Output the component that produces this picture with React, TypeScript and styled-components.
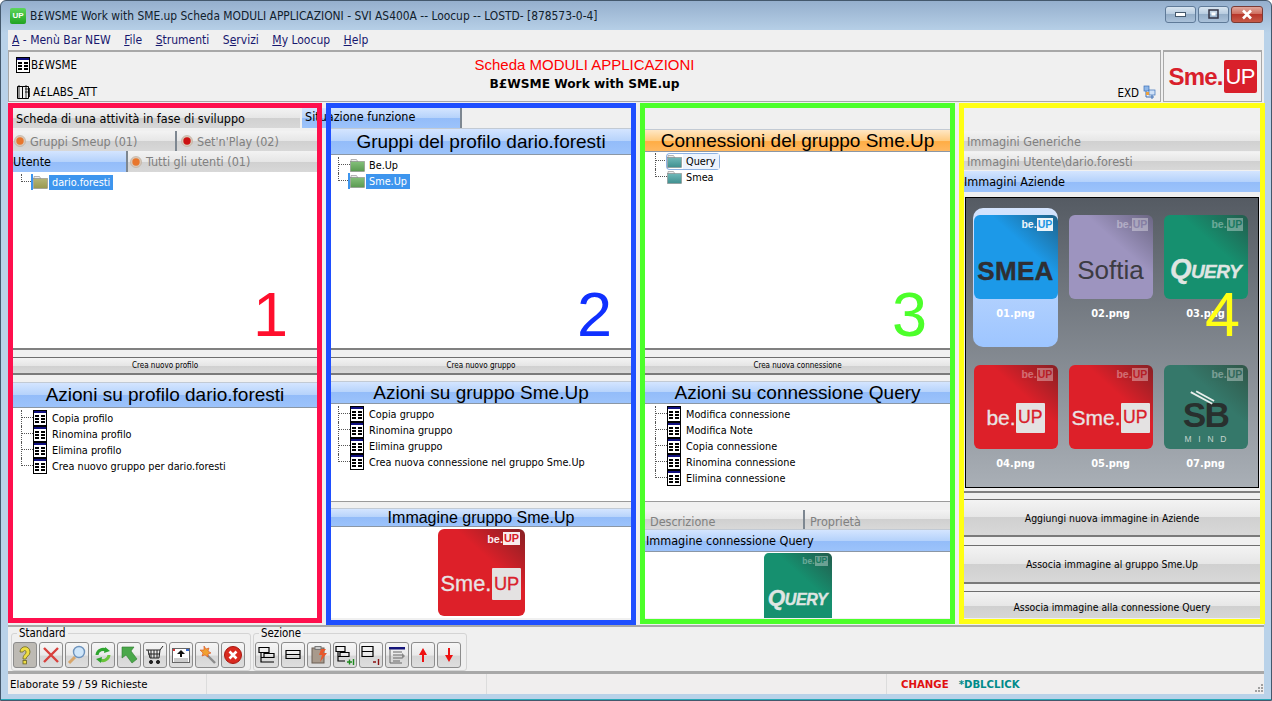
import React from 'react';
import styled, { createGlobalStyle, css } from 'styled-components';

const UI_FONT = `'DejaVu Sans Condensed', 'DejaVu Sans', sans-serif`;
const ARIAL = `'Liberation Sans', Arial, sans-serif`;

const GlobalStyle = createGlobalStyle`
  html, body { margin: 0; padding: 0; background: #fff; overflow: hidden; }
  body { font-family: ${UI_FONT}; font-size: 10.8px; color: #000; }
  * { box-sizing: border-box; }
`;

const Win = styled.div`
  width: 1272px;
  height: 701px;
  display: flex;
  flex-direction: column;
  padding: 0 7px 6px;
  border: 1px solid #44586c;
  border-radius: 6px 6px 0 0;
  background: linear-gradient(180deg, #95afcd 0, #b9d2e9 32px, #b9d2e9 100%);
  box-shadow: inset 0 -1px 0 #2aa9b8;
  overflow: hidden;
`;

const TitleBar = styled.div`
  height: 29px;
  display: flex;
  align-items: center;
  gap: 4px;
  padding: 0 1px 0 2px;
`;

const AppBadge = styled.span`
  width: 16px;
  height: 16px;
  border-radius: 2px;
  background: linear-gradient(180deg, #5cd65c, #22a322);
  color: #fff;
  font: bold 8px ${ARIAL};
  display: flex;
  align-items: center;
  justify-content: center;
`;

const TitleText = styled.span`
  font-size: 11.9px;
  color: #10202c;
  flex: 1;
  white-space: nowrap;
`;

const WinButtons = styled.div`
  display: flex;
  gap: 2px;
  margin-top: -3px;
`;

const WinButton = styled.div<{ $close?: boolean }>`
  width: ${(p) => (p.$close ? '32px' : '31px')};
  height: 17px;
  border: 1px solid ${(p) => (p.$close ? '#7a3a34' : '#5f7a98')};
  border-radius: 3px;
  display: flex;
  align-items: center;
  justify-content: center;
  background: ${(p) =>
    p.$close
      ? 'linear-gradient(180deg,#e0a79c 0,#cf6f60 45%,#b8362a 50%,#c65a48 100%)'
      : 'linear-gradient(180deg,#d9e5f0 0,#b8cce0 45%,#95aec8 50%,#abc2da 100%)'};
`;

const Menu = styled.div`
  height: 20px;
  background: #f0f0f0;
  display: flex;
  align-items: center;
  gap: 13.5px;
  padding-left: 4px;
  color: #17176e;
  font-size: 12px;
`;

const MenuItem = styled.span`
  & u { text-underline-offset: 1px; }
`;

const HeaderBand = styled.div`
  height: 52px;
  background: #f0f0f0;
  display: flex;
  gap: 2px;
  padding-right: 2px;
`;

const HeaderMain = styled.div`
  flex: 1;
  display: grid;
  grid-template-columns: 1fr auto 1fr;
  border: 1px solid #a8a8a8;
  border-top: 2px solid #a8a8a8;
`;

const HeaderLeft = styled.div`
  display: flex;
  flex-direction: column;
  gap: 7px;
  padding: 3px 0 0 7px;
`;

const HeaderItem = styled.div`
  display: flex;
  align-items: center;
  gap: 1px;
  font-size: 11.5px;
  height: 20px;
`;

const HeaderCenter = styled.div`
  display: flex;
  flex-direction: column;
  align-items: center;
  padding-top: 3px;
`;

const SheetTitle = styled.div`
  color: #ff0000;
  font: 15px ${ARIAL};
  line-height: 19px;
`;

const SheetSubtitle = styled.div`
  font-weight: bold;
  font-size: 12.2px;
  line-height: 21px;
  font-family: 'DejaVu Sans', sans-serif;
`;

const HeaderRight = styled.div`
  display: flex;
  align-items: flex-end;
  justify-content: flex-end;
  gap: 4px;
  padding: 0 3px 2px 0;
  font-size: 11.5px;
`;

const LogoBox = styled.div`
  width: 99px;
  border: 1px solid #a8a8a8;
  border-top-width: 2px;
  display: flex;
  align-items: center;
  justify-content: center;
  color: #d9202b;
  font: bold 24px ${ARIAL};
  letter-spacing: -0.8px;
`;

const LogoUp = styled.span`
  background: #d9202b;
  color: #fff;
  border-radius: 2px;
  height: 33px;
  display: flex;
  align-items: center;
  padding: 0 2px;
  font-size: 22px;
  font-weight: normal;
  margin-left: 1px;
`;

const Workspace = styled.div`
  height: 523px;
  background: #f0f0f0;
  padding: 6px 0 0 5px;
  display: grid;
  grid-template-columns: 304px 300px 305px 296px;
  grid-template-rows: 20px 490px;
  column-gap: 14px;
`;

const TabStrip = styled.div`
  grid-column: 1 / 3;
  grid-row: 1;
  display: flex;
  gap: 2px;
`;

const Column = styled.div<{ $col: number; $full?: boolean }>`
  grid-column: ${(p) => p.$col};
  grid-row: ${(p) => (p.$full ? '1 / 3' : '2')};
  display: flex;
  flex-direction: column;
  min-width: 0;
  overflow: hidden;
`;

const Frame = styled.div<{ $col: number; $color: string; $bottom: number }>`
  grid-column: ${(p) => p.$col};
  grid-row: 1 / 3;
  margin: -5px -5px ${(p) => p.$bottom}px;
  border: 5px solid ${(p) => p.$color};
  position: relative;
  z-index: 5;
  pointer-events: none;
`;

const Digit = styled.span<{ $color: string; $right: number }>`
  position: absolute;
  top: 175px;
  right: ${(p) => p.$right}px;
  color: ${(p) => p.$color};
  font: 63px/1 ${ARIAL};
`;

const grey = css`
  background: linear-gradient(180deg, #f3f3f3 0, #e6e6e6 50%, #d0d0d0 50%, #d8d8d8 100%);
`;
const blue = css`
  background: linear-gradient(180deg, #d4e5ff 0, #b5d2fb 50%, #93bcf9 50%, #9cc3fb 100%);
`;
const orange = css`
  background: linear-gradient(180deg, #ffe7c4 0, #ffcb80 50%, #ffad45 55%, #ffb860 100%);
`;

const Tab = styled.div<{
  $active?: boolean;
  $w?: number;
  $h?: number;
  $strong?: boolean;
  $pad?: number;
  $raise?: number;
  $drop?: number;
}>`
  ${(p) => (p.$active ? blue : grey)};
  ${(p) => (p.$w ? `width: ${p.$w}px;` : 'flex: 1;')}
  height: ${(p) => p.$h ?? 20}px;
  display: flex;
  align-items: center;
  gap: 4px;
  padding: ${(p) => p.$drop ?? 0}px 0 ${(p) => p.$raise ?? 0}px ${(p) => p.$pad ?? 3}px;
  font-size: 12.5px;
  white-space: nowrap;
  overflow: hidden;
  color: ${(p) => (p.$active || p.$strong ? '#000' : '#808080')};
  border-right: ${(p) => (p.$strong ? 'none' : '2px solid #7d8791')};
`;

const TabRow = styled.div<{ $top?: number }>`
  display: flex;
  flex: none;
  margin-top: ${(p) => p.$top ?? 0}px;
  & > :last-child { border-right: none; }
`;

const SectionHead = styled.div<{ $size?: number; $h: number; $tone?: 'blue' | 'orange'; $left?: boolean }>`
  ${(p) => (p.$tone === 'orange' ? orange : blue)};
  flex: none;
  height: ${(p) => p.$h}px;
  display: flex;
  align-items: center;
  justify-content: ${(p) => (p.$left ? 'flex-start' : 'center')};
  font: ${(p) => p.$size ?? 19}px ${ARIAL};
  ${(p) => p.$left && `font-family: ${UI_FONT}; padding-left: 1px;`}
  border-top: 1px solid #c2cad4;
  border-bottom: 1px solid #8b97a5;
  white-space: nowrap;
`;

const Tree = styled.div<{ $h?: number; $left: number; $top?: number; $ruled?: boolean }>`
  background: #fff;
  flex: ${(p) => (p.$h ? 'none' : 1)};
  ${(p) => p.$h && `height: ${p.$h}px;`}
  padding: ${(p) => p.$top ?? 2}px 0 0 ${(p) => p.$left}px;
  border-bottom: ${(p) => (p.$ruled ? '1px solid #9a9a9a' : 'none')};
`;

const Row = styled.div`
  height: 16px;
  display: flex;
  align-items: center;
  white-space: nowrap;
`;

const Connector = styled.span<{ $last?: boolean }>`
  width: 12px;
  height: ${(p) => (p.$last ? '8px' : '16px')};
  align-self: flex-start;
  flex: none;
  border-left: 1px dotted #555;
  background: repeating-linear-gradient(90deg, #555 0 1px, transparent 1px 2px) no-repeat 0 7px / 100% 1px;
`;

const Entry = styled.span<{ $focus?: boolean }>`
  display: flex;
  align-items: center;
  height: 15px;
  ${(p) => p.$focus && 'box-shadow: 0 0 0 1px #8db2e3; border-radius: 3px;'}
`;

const Slot = styled.span<{ $selected?: boolean }>`
  width: 16px;
  height: 16px;
  flex: none;
  display: flex;
  align-items: center;
  ${(p) => p.$selected && 'box-shadow: -2px 0 0 #3d95ee;'}
`;

const Label = styled.span<{ $selected?: boolean; $focus?: boolean }>`
  padding: 0 3px;
  line-height: 15px;
  ${(p) => p.$selected && 'background: #3d95ee; color: #fff;'}
  ${(p) => p.$focus && 'background: #eef4fd;'}
`;

const Gap = styled.div<{ $h: number; $line?: boolean }>`
  height: ${(p) => p.$h}px;
  flex: none;
  ${(p) => p.$line && 'border-top: 2px solid #808080;'}
`;

const ActionBar = styled.div<{ $h: number; $size?: number }>`
  ${grey};
  flex: none;
  height: ${(p) => p.$h}px;
  border-top: 1px solid #6e6e6e;
  border-bottom: 2px solid #7a7a7a;
  display: flex;
  align-items: center;
  justify-content: center;
  font-size: ${(p) => p.$size ?? 8}px;
  white-space: nowrap;
`;

const ImageArea = styled.div<{ $top?: number }>`
  flex: 1;
  background: #fff;
  display: flex;
  justify-content: center;
  padding-top: ${(p) => p.$top ?? 2}px;
`;

const Gallery = styled.div`
  flex: none;
  height: 291px;
  margin: 5px 1px 0 1px;
  border: 1px solid #000;
  background: linear-gradient(180deg, #555b63 0, #a9afb6 100%);
  display: grid;
  grid-template-columns: repeat(3, 85px);
  grid-auto-rows: 139px;
  column-gap: 10px;
  row-gap: 11px;
  padding: 10px 0 0 7px;
`;

const Card = styled.div<{ $selected?: boolean }>`
  border-radius: 10px;
  padding-top: 7px;
  text-align: center;
  ${(p) => p.$selected && 'background: linear-gradient(180deg, #d4e4fd 0, #9dc5ff 100%);'}
`;

const CardName = styled.div`
  color: #fff;
  font-weight: bold;
  font-size: 11px;
  margin-top: 8px;
  line-height: 14px;
`;

type TileKind = 'smea' | 'softia' | 'query' | 'beup' | 'smeup' | 'sb';

const tileColors: Record<TileKind, [string, string]> = {
  smea: ['#1c99e8', '#1f6289'],
  softia: ['#9d94bf', '#6b6683'],
  query: ['#16906f', '#235c4d'],
  beup: ['#dd2029', '#872024'],
  smeup: ['#dd2029', '#872024'],
  sb: ['#35786a', '#305648'],
};

const Tile = styled.div<{ $kind: TileKind; $size: number; $h?: number }>`
  position: relative;
  width: ${(p) => p.$size}px;
  height: ${(p) => p.$h ?? p.$size}px;
  font-size: ${(p) => p.$size}px;
  margin: 0 auto;
  border-radius: 0.07em;
  overflow: hidden;
  background: linear-gradient(
    222deg,
    ${(p) => tileColors[p.$kind][1]} 0,
    ${(p) => tileColors[p.$kind][0]} 38%
  );
  display: flex;
  align-items: center;
  justify-content: center;
  padding-top: 0.34em;
`;

const Badge = styled.span<{ $dim?: boolean }>`
  position: absolute;
  top: 0.3em;
  right: 0.4em;
  display: flex;
  align-items: center;
  font: bold 0.125em ${ARIAL};
  color: #fff;
  opacity: ${(p) => (p.$dim ? 0.35 : 0.92)};
`;

const BadgeBox = styled.span<{ $color: string }>`
  background: #fff;
  color: ${(p) => p.$color};
  padding: 0.1em 0.1em;
  line-height: 1;
`;

const SmeaMark = styled.span`
  font: 900 0.31em ${ARIAL};
  color: #2f2f33;
  -webkit-text-stroke: 0.4px #2f2f33;
  letter-spacing: 0.01em;
`;

const SoftiaMark = styled.span`
  font: 0.31em ${ARIAL};
  color: #3c3b42;
  margin-top: -0.05em;
`;

const QueryMark = styled.span`
  font: italic 900 0.33em ${ARIAL};
  font-variant: small-caps;
  color: #dfe5e2;
  margin-top: -0.2em;
  letter-spacing: -0.02em;
  -webkit-text-stroke: 0.4px #dfe5e2;
`;

const RedMark = styled.span`
  display: flex;
  align-items: center;
  font: 0.25em ${ARIAL};
  color: #e8e4e4;
  margin-top: -0.3em;
  -webkit-text-stroke: 0.3px #e8e4e4;
`;

const RedBox = styled.span`
  background: #e4e2e2;
  color: #d9202b;
  padding: 0.36em 0.12em;
  line-height: 1;
  font-size: 0.84em;
  border-radius: 1px;
  margin-left: 0.02em;
  -webkit-text-stroke: 0.3px #d9202b;
`;

const SbMark = styled.span`
  display: flex;
  flex-direction: column;
  align-items: center;
  color: #28302e;
  font: 900 0.42em/0.9 ${ARIAL};
  letter-spacing: -0.05em;
`;

const SbMind = styled.span`
  font: 0.24em ${ARIAL};
  letter-spacing: 0.8em;
  color: #c4d3ce;
  margin: 0.4em 0 0 0.8em;
`;

const SbSlash = styled.svg`
  position: absolute;
  left: 0.3em;
  top: 0.3em;
  width: 0.32em;
  height: 0.2em;
`;

const ToolbarPanel = styled.div`
  height: 49px;
  background: #f0f0f0;
  border-top: 2px solid #a8a8a8;
  border-bottom: 3px solid #a8a8a8;
  display: flex;
  gap: 2px;
  padding-left: 3px;
`;

const Group = styled.fieldset<{ $w: number }>`
  width: ${(p) => p.$w}px;
  margin: 0;
  height: 44px;
  padding: 0 0 0 1px;
  border: 1px solid #d4d4d4;
  border-radius: 3px;
  display: flex;
  gap: 2px;
  min-width: 0;
  align-items: flex-start;
`;

const Legend = styled.legend`
  font-size: 11.4px;
  padding: 0 2px;
  margin-left: 4px;
  line-height: 13px;
`;

const ToolButton = styled.div<{ $pressed?: boolean }>`
  width: 24px;
  height: 26px;
  margin-top: 2px;
  border: 1px solid #8c8c8c;
  border-radius: 3px;
  background: ${(p) =>
    p.$pressed ? '#bdbab4' : 'linear-gradient(180deg,#f6f6f6 0,#eaeaea 50%,#d6d6d6 55%,#dedede 100%)'};
  display: flex;
  align-items: center;
  justify-content: center;
`;

const StatusBar = styled.div`
  height: 20px;
  background: #f0eeee;
  display: grid;
  grid-template-columns: 199px 280px 400px 1fr;
  align-items: stretch;
  font-size: 11.3px;
`;

const StatusCell = styled.div`
  display: flex;
  align-items: center;
  gap: 10px;
  padding-left: 2px;
  border-right: 1px solid #dcdcdc;
  &:last-child { border-right: none; padding-left: 14px; }
`;

const StatusTag = styled.span<{ $color: string }>`
  color: ${(p) => p.$color};
  font-weight: bold;
`;

const Grip = styled.svg`
  margin: auto 0 1px auto;
`;

const TableIcon = () => (
  <svg width="14" height="16" viewBox="0 0 14 16">
    <rect x="0.5" y="0.5" width="13" height="15" fill="#fff" stroke="#000" />
    <rect x="1" y="1" width="12" height="2" fill="#101080" />
    {[5, 8, 11].map((y) => (
      <g key={y} fill="#000">
        <rect x="2" y={y} width="4" height="2" />
        <rect x="8" y={y} width="4" height="2" />
      </g>
    ))}
  </svg>
);

const BookIcon = () => (
  <svg width="16" height="16" viewBox="0 0 16 16" fill="none" stroke="#000">
    <path d="M1.5 2.5h5v12h-5zM6.5 2.5h6v12h-6z" />
    <path d="M3 1v13M10 1v14M13.5 4v9M9 5h3M9 8h3" strokeWidth="0.8" />
  </svg>
);

const FolderIcon = ({ id, color, dark }: { id: string; color: string; dark: string }) => (
  <svg width="15" height="14" viewBox="0 0 15 14">
    <defs>
      <linearGradient id={id} x1="0" y1="0" x2="0" y2="1">
        <stop offset="0" stopColor={color} />
        <stop offset="1" stopColor={dark} />
      </linearGradient>
    </defs>
    <path d="M1 4V1.5h5.5L8 4z" fill="#ececec" stroke="#a2a2a2" strokeWidth="0.8" />
    <rect x="0.5" y="3.5" width="14" height="10" fill={`url(#${id})`} stroke="#8b8b8b" strokeWidth="0.6" />
  </svg>
);

const Ball = ({ color }: { color: string }) => (
  <svg width="12" height="12" viewBox="0 0 13 13">
    <circle cx="6.5" cy="6.5" r="6" fill="#d8c8b8" stroke="#b8a898" strokeWidth="0.6" />
    <circle cx="6.5" cy="6.5" r="4" fill={color} />
  </svg>
);

const ExdIcon = () => (
  <svg width="14" height="15" viewBox="0 0 14 15">
    <rect x="1" y="1" width="5" height="5" fill="#8fb7e8" stroke="#3a6fb8" strokeWidth="0.7" />
    <rect x="6" y="5" width="6" height="5" fill="#cfe1f7" stroke="#3a6fb8" strokeWidth="0.7" />
    <path d="M3 6v6h8M9 10v4" stroke="#3a6fb8" fill="none" />
    <rect x="3" y="7" width="3" height="3" fill="#e8a040" />
  </svg>
);

const stroke = { fill: 'none', stroke: '#000', strokeWidth: 1.2 };

const toolIcons: React.ReactNode[] = [
  <svg key="help" width="20" height="22" viewBox="0 0 20 22">
    <path d="M5 8c0-7 10-7 10 0 0 4-4 4-4 7H8c0-5 3-4 3-7 0-2-2-2-3 0z" fill="#eedd44" stroke="#6b6420" strokeWidth="0.8" />
    <rect x="8" y="16.5" width="3.4" height="3.4" fill="#eedd44" stroke="#6b6420" strokeWidth="0.8" />
  </svg>,
  <svg key="x" width="18" height="18" viewBox="0 0 18 18">
    <path d="M2 2l14 14M16 2L2 16" stroke="#d8403c" strokeWidth="2.4" />
  </svg>,
  <svg key="find" width="20" height="20" viewBox="0 0 20 20">
    <path d="M8 12l-6 6" stroke="#d8a66a" strokeWidth="3" />
    <circle cx="12" cy="7" r="5.5" fill="#cfe6fa" stroke="#6d93bd" strokeWidth="1.4" />
  </svg>,
  <svg key="refresh" width="20" height="20" viewBox="0 0 20 20" fill="none" strokeWidth="3">
    <path d="M4 10a6 6 0 0 1 10-4" stroke="#2fa52f" />
    <path d="M16 10a6 6 0 0 1-10 4" stroke="#6ac43a" />
    <path d="M12 2l5 4-6 2zM8 18l-5-4 6-2z" fill="#2fa52f" strokeWidth="0" />
  </svg>,
  <svg key="back" width="20" height="20" viewBox="0 0 20 20">
    <path d="M3 2h12l-3 4 6 8-5 4-6-8-4 3z" fill="#4aa84a" stroke="#2c7a2c" strokeWidth="0.6" />
  </svg>,
  <svg key="cart" width="20" height="20" viewBox="0 0 20 20" fill="none" stroke="#222">
    <path d="M1 5h14l3-4M3 5l2 8h9l1-8M6 5v8M9 5v8M12 5v8M3 9h12" />
    <circle cx="6" cy="17" r="1.6" fill="#222" />
    <circle cx="13" cy="17" r="1.6" fill="#222" />
  </svg>,
  <svg key="up" width="20" height="20" viewBox="0 0 20 20">
    <rect x="1.5" y="3.5" width="17" height="14" fill="#fff" stroke="#666" />
    <path d="M3 14h14M3 16h14" stroke="#999" />
    <path d="M10 5l4 4h-3v3H9V9H6z" fill="#111" />
    <rect x="2" y="4" width="2" height="2" fill="#d33" />
    <rect x="15" y="4" width="3" height="2" fill="#36c" />
  </svg>,
  <svg key="wand" width="20" height="20" viewBox="0 0 20 20">
    <path d="M10 10l8 8" stroke="#8a8a8a" strokeWidth="2.4" />
    <path d="M7 1l2 3 3-1-1 3 3 2-3 1v3l-3-2-3 1 1-3-3-3h4z" fill="#f0a030" stroke="#d84a20" strokeWidth="0.6" />
  </svg>,
  <svg key="stop" width="20" height="20" viewBox="0 0 20 20">
    <circle cx="10" cy="10" r="8.5" fill="#d92a20" stroke="#a81810" />
    <path d="M6.5 6.5l7 7M13.5 6.5l-7 7" stroke="#fff" strokeWidth="2.6" />
  </svg>,
  <svg key="tree1" width="20" height="20" viewBox="0 0 20 20" {...stroke}>
    <path d="M2 2.5h10v5H2zM7 8.5h10v4H7zM4 7.5V17h13M4 12.5h3" />
  </svg>,
  <svg key="box" width="20" height="20" viewBox="0 0 20 20" {...stroke}>
    <path d="M3 5.5h14v4H3zM3 9.5h14v4H3zM3 5.5v8" />
  </svg>,
  <svg key="clip" width="20" height="20" viewBox="0 0 20 20">
    <rect x="3" y="3" width="12" height="15" fill="#a89a8c" stroke="#6b5f55" />
    <rect x="6" y="1.5" width="6" height="3" fill="#ccc" stroke="#777" />
    <path d="M12 4l5 0-3 4 4 0-7 9 2-7-3 0z" fill="#e8582c" />
  </svg>,
  <svg key="plus" width="22" height="22" viewBox="0 0 22 22">
    <path d="M2 2.5h9v5H2zM6 8.5h9v4H6zM4 7.5V17h7M4 12.5h2" {...stroke} />
    <path d="M13 18h5M15.5 15.5v5M19.5 15v6" stroke="#1d8a1d" strokeWidth="1.4" fill="none" />
  </svg>,
  <svg key="minus" width="22" height="22" viewBox="0 0 22 22">
    <path d="M2 2.5h11v5H2zM2 7.5h11v5H2z" {...stroke} />
    <path d="M13 18h3M18.5 15v6" stroke="#8a1010" strokeWidth="1.4" fill="none" />
  </svg>,
  <svg key="list" width="20" height="20" viewBox="0 0 20 20">
    <rect x="2" y="2" width="16" height="2.5" fill="#15157a" />
    <path d="M3 4v14h12M6 7h9M6 10h9M6 13h9M6 16h7" stroke="#666" fill="none" />
    <path d="M15 8l3 3-3 3z" fill="#888" />
  </svg>,
  <svg key="arrowUp" width="14" height="20" viewBox="0 0 14 20">
    <path d="M7 3l4 7H8v7H6v-7H3z" fill="#ee1111" />
  </svg>,
  <svg key="arrowDown" width="14" height="20" viewBox="0 0 14 20">
    <path d="M7 17l4-7H8V3H6v7H3z" fill="#ee1111" />
  </svg>,
];

interface TreeItem {
  text: string;
  selected?: boolean;
  focus?: boolean;
}

const TreeRows: React.FC<{ items: TreeItem[]; icon: React.ReactNode }> = ({ items, icon }) => (
  <>
    {items.map((item, i) => (
      <Row key={item.text}>
        <Connector $last={i === items.length - 1} />
        <Entry $focus={item.focus}>
          <Slot $selected={item.selected}>{icon}</Slot>
          <Label $selected={item.selected} $focus={item.focus}>
            {item.text}
          </Label>
        </Entry>
      </Row>
    ))}
  </>
);

const texts = (list: string[]): TreeItem[] => list.map((text) => ({ text }));

const BeBadge: React.FC<{ dim?: boolean; kind: TileKind }> = ({ dim, kind }) => (
  <Badge $dim={dim}>
    be.<BadgeBox $color={tileColors[kind][0]}>UP</BadgeBox>
  </Badge>
);

const tiles: { name: string; kind: TileKind; dim?: boolean; mark: React.ReactNode }[] = [
  { name: '01.png', kind: 'smea', mark: <SmeaMark>SMEA</SmeaMark> },
  { name: '02.png', kind: 'softia', dim: true, mark: <SoftiaMark>Softia</SoftiaMark> },
  { name: '03.png', kind: 'query', dim: true, mark: <QueryMark>Query</QueryMark> },
  {
    name: '04.png',
    kind: 'beup',
    dim: true,
    mark: (
      <RedMark>
        be.<RedBox>UP</RedBox>
      </RedMark>
    ),
  },
  {
    name: '05.png',
    kind: 'smeup',
    dim: true,
    mark: (
      <RedMark>
        Sme.<RedBox>UP</RedBox>
      </RedMark>
    ),
  },
  {
    name: '07.png',
    kind: 'sb',
    dim: true,
    mark: (
      <>
        <SbSlash viewBox="0 0 30 18">
          <path d="M2 2l24 13M8 1l20 11" stroke="#e8efec" strokeWidth="2" />
        </SbSlash>
        <SbMark>
          SB
          <SbMind>MIND</SbMind>
        </SbMark>
      </>
    ),
  },
];

const App: React.FC = () => {
  return (
    <Win>
      <GlobalStyle />
      <TitleBar>
        <AppBadge>UP</AppBadge>
        <TitleText>B£WSME Work with SME.up Scheda MODULI APPLICAZIONI - SVI AS400A -- Loocup -- LOSTD- [878573-0-4]</TitleText>
        <WinButtons>
          <WinButton>
            <svg width="11" height="5" viewBox="0 0 11 5">
              <rect x="0.5" y="0.5" width="10" height="4" fill="#fff" stroke="#44586c" />
            </svg>
          </WinButton>
          <WinButton>
            <svg width="11" height="10" viewBox="0 0 11 10">
              <rect x="1" y="1" width="9" height="8" fill="none" stroke="#334" strokeWidth="1.5" />
              <rect x="3.5" y="3.5" width="4" height="3" fill="#fff" />
            </svg>
          </WinButton>
          <WinButton $close>
            <svg width="12" height="11" viewBox="0 0 12 11">
              <path d="M2 1.5l8 8M10 1.5l-8 8" stroke="#fff" strokeWidth="2.6" />
            </svg>
          </WinButton>
        </WinButtons>
      </TitleBar>

      <Menu>
        <MenuItem><u>A</u> - Menù Bar NEW</MenuItem>
        <MenuItem><u>F</u>ile</MenuItem>
        <MenuItem><u>S</u>trumenti</MenuItem>
        <MenuItem>S<u>e</u>rvizi</MenuItem>
        <MenuItem><u>M</u>y Loocup</MenuItem>
        <MenuItem><u>H</u>elp</MenuItem>
      </Menu>

      <HeaderBand>
        <HeaderMain>
          <HeaderLeft>
            <HeaderItem><TableIcon />B£WSME</HeaderItem>
            <HeaderItem><BookIcon />A£LABS_ATT</HeaderItem>
          </HeaderLeft>
          <HeaderCenter>
            <SheetTitle>Scheda MODULI APPLICAZIONI</SheetTitle>
            <SheetSubtitle>B£WSME Work with SME.up</SheetSubtitle>
          </HeaderCenter>
          <HeaderRight>EXD <ExdIcon /></HeaderRight>
        </HeaderMain>
        <LogoBox>Sme.<LogoUp>UP</LogoUp></LogoBox>
      </HeaderBand>

      <Workspace>
        <TabStrip>
          <Tab $w={287} $strong>Scheda di una attività in fase di sviluppo</Tab>
          <Tab $active $w={160} $raise={3}>Situazione funzione</Tab>
        </TabStrip>

        <Column $col={1}>
          <TabRow $top={3}>
            <Tab $w={164} $pad={1}><Ball color="#e8762c" />Gruppi Smeup (01)</Tab>
            <Tab $pad={4}><Ball color="#cc1111" />Set'n'Play (02)</Tab>
          </TabRow>
          <TabRow>
            <Tab $active $pad={0} $w={115} $h={21}>Utente</Tab>
            <Tab $pad={2} $h={21}><Ball color="#e8762c" />Tutti gli utenti (01)</Tab>
          </TabRow>
          <Tree $left={8} $h={176}>
            <TreeRows items={[{ text: 'dario.foresti', selected: true }]} icon={<FolderIcon id="fold-user" color="#b4b478" dark="#98984e" />} />
          </Tree>
          <Gap $h={9} $line />
          <ActionBar $h={18}>Crea nuovo profilo</ActionBar>
          <Gap $h={7} />
          <SectionHead $h={26}>Azioni su profilo dario.foresti</SectionHead>
          <Tree $left={8}>
            <TreeRows
              icon={<TableIcon />}
              items={texts(['Copia profilo', 'Rinomina profilo', 'Elimina profilo', 'Crea nuovo gruppo per dario.foresti'])}
            />
          </Tree>
        </Column>

        <Column $col={2}>
          <SectionHead $h={27}>Gruppi del profilo dario.foresti</SectionHead>
          <Tree $left={7} $h={193}>
            <TreeRows
              icon={<FolderIcon id="fold-group" color="#84c07a" dark="#5a9a50" />}
              items={[{ text: 'Be.Up' }, { text: 'Sme.Up', selected: true }]}
            />
          </Tree>
          <Gap $h={9} $line />
          <ActionBar $h={18}>Crea nuovo gruppo</ActionBar>
          <Gap $h={6} />
          <SectionHead $h={23}>Azioni su gruppo Sme.Up</SectionHead>
          <Tree $left={7} $h={98} $ruled>
            <TreeRows
              icon={<TableIcon />}
              items={texts(['Copia gruppo', 'Rinomina gruppo', 'Elimina gruppo', 'Crea nuova connessione nel gruppo Sme.Up'])}
            />
          </Tree>
          <Gap $h={6} />
          <SectionHead $h={19} $size={16}>Immagine gruppo Sme.Up</SectionHead>
          <ImageArea>
            <Tile $kind="smeup" $size={87}>
              <BeBadge kind="smeup" />
              <RedMark>Sme.<RedBox>UP</RedBox></RedMark>
            </Tile>
          </ImageArea>
        </Column>

        <Column $col={3} $full>
          <Gap $h={21} />
          <SectionHead $h={23} $tone="orange">Connessioni del gruppo Sme.Up</SectionHead>
          <Tree $left={10} $top={1} $h={196}>
            <TreeRows
              icon={<FolderIcon id="fold-conn" color="#70b8b8" dark="#3f8f8f" />}
              items={[{ text: 'Query', focus: true }, { text: 'Smea' }]}
            />
          </Tree>
          <Gap $h={9} $line />
          <ActionBar $h={18}>Crea nuova connessione</ActionBar>
          <Gap $h={6} />
          <SectionHead $h={23}>Azioni su connessione Query</SectionHead>
          <Tree $left={10} $h={98} $ruled>
            <TreeRows
              icon={<TableIcon />}
              items={texts(['Modifica connessione', 'Modifica Note', 'Copia connessione', 'Rinomina connessione', 'Elimina connessione'])}
            />
          </Tree>
          <TabRow $top={8}>
            <Tab $w={160} $h={19} $pad={5} $drop={3}>Descrizione</Tab>
            <Tab $h={19} $pad={5} $drop={3}>Proprietà</Tab>
          </TabRow>
          <SectionHead $h={23} $size={12.5} $left>Immagine connessione Query</SectionHead>
          <ImageArea $top={1}>
            <Tile $kind="query" $size={68} $h={72}>
              <BeBadge dim kind="query" />
              <QueryMark>Query</QueryMark>
            </Tile>
          </ImageArea>
        </Column>

        <Column $col={4} $full>
          <Gap $h={23} />
          <TabRow>
            <Tab $h={20}>Immagini Generiche</Tab>
          </TabRow>
          <TabRow $top={1}>
            <Tab $h={18}>Immagini Utente\dario.foresti</Tab>
          </TabRow>
          <TabRow $top={1}>
            <Tab $active $pad={0} $h={21}>Immagini Aziende</Tab>
          </TabRow>
          <Gallery>
            {tiles.map((tile, i) => (
              <Card key={tile.name} $selected={i === 0}>
                <Tile $kind={tile.kind} $size={84}>
                  <BeBadge dim={tile.dim} kind={tile.kind} />
                  {tile.mark}
                </Tile>
                <CardName>{tile.name}</CardName>
              </Card>
            ))}
          </Gallery>
          <Gap $h={3} />
          <Gap $h={8} $line />
          <ActionBar $h={38} $size={10.4}>Aggiungi nuova immagine in Aziende</ActionBar>
          <Gap $h={8} />
          <ActionBar $h={39} $size={10.4}>Associa immagine al gruppo Sme.Up</ActionBar>
          <Gap $h={7} />
          <ActionBar $h={32} $size={10.4}>Associa immagine alla connessione Query</ActionBar>
        </Column>

        <Frame $col={1} $color="#ff0f4d" $bottom={-5}><Digit $color="#ff0f2d" $right={29}>1</Digit></Frame>
        <Frame $col={2} $color="#1f4fff" $bottom={-7}><Digit $color="#1030ff" $right={19}>2</Digit></Frame>
        <Frame $col={3} $color="#4cff2a" $bottom={-6}><Digit $color="#4cff2a" $right={23}>3</Digit></Frame>
        <Frame $col={4} $color="#ffff14" $bottom={-6}><Digit $color="#ffff14" $right={20}>4</Digit></Frame>
      </Workspace>

      <ToolbarPanel>
        <Group $w={240}>
          <Legend>Standard</Legend>
          {toolIcons.slice(0, 9).map((icon, i) => (
            <ToolButton key={i} $pressed={i === 0}>{icon}</ToolButton>
          ))}
        </Group>
        <Group $w={214}>
          <Legend>Sezione</Legend>
          {toolIcons.slice(9).map((icon, i) => (
            <ToolButton key={i}>{icon}</ToolButton>
          ))}
        </Group>
      </ToolbarPanel>

      <StatusBar>
        <StatusCell>Elaborate 59 / 59 Richieste</StatusCell>
        <StatusCell />
        <StatusCell />
        <StatusCell>
          <StatusTag $color="#e01010">CHANGE</StatusTag>
          <StatusTag $color="#008a8a">*DBLCLICK</StatusTag>
          <Grip width="10" height="10" viewBox="0 0 10 10" fill="#a0a0a0">
            <rect x="7" y="1" width="2" height="2" />
            <rect x="4" y="4" width="2" height="2" />
            <rect x="7" y="4" width="2" height="2" />
            <rect x="1" y="7" width="2" height="2" />
            <rect x="4" y="7" width="2" height="2" />
            <rect x="7" y="7" width="2" height="2" />
          </Grip>
        </StatusCell>
      </StatusBar>
    </Win>
  );
};

export default App;
